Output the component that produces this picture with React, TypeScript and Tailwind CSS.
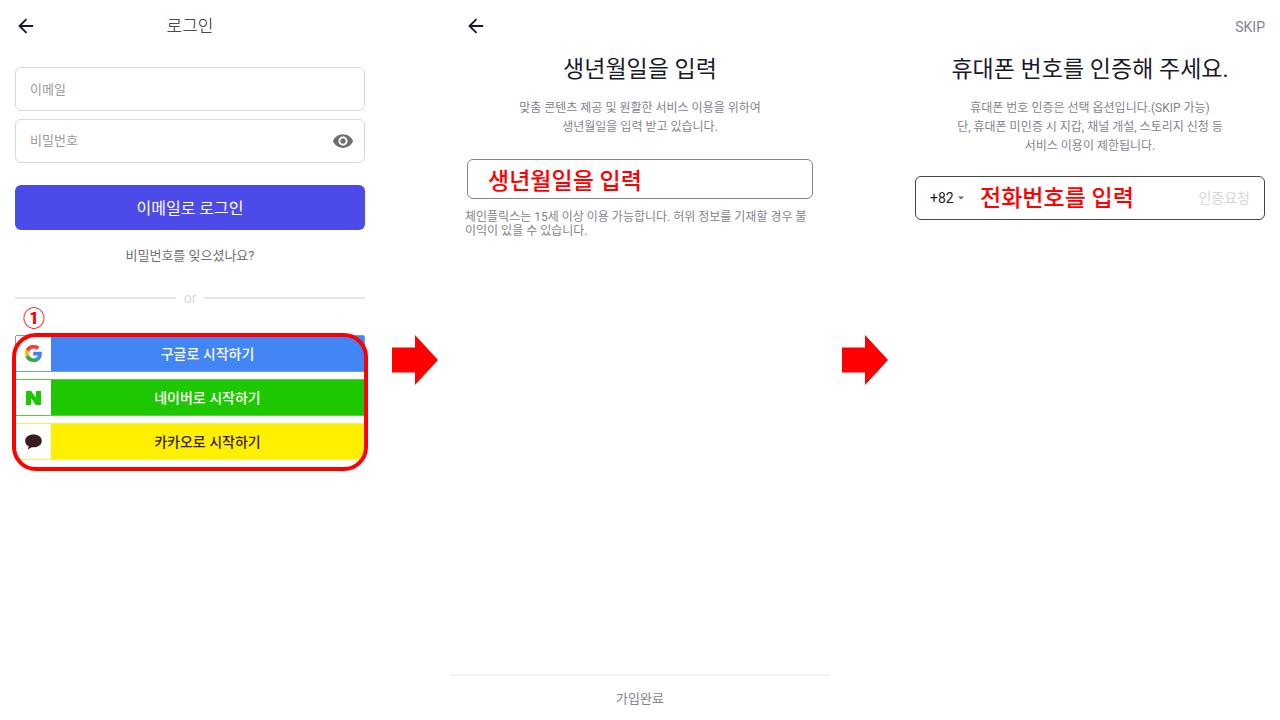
import type { ReactNode } from "react";
import { ArrowLeft } from "lucide-react";
import { MdVisibility } from "react-icons/md";

function BackButton() {
  return (
    <button type="button" aria-label="뒤로" className="text-[#1b1a2b]">
      <ArrowLeft size={22} strokeWidth={2} />
    </button>
  );
}

function StepArrow() {
  return (
    <div className="flex items-center justify-center">
      <svg width="46" height="50" viewBox="0 0 46 50" fill="#ff0000" aria-hidden="true">
        <path d="M0 12.5H23V0L46 25L23 50V37.5H0Z" />
      </svg>
    </div>
  );
}

function GoogleLogo() {
  return (
    <svg width="17" height="17" viewBox="0 0 48 48" strokeWidth="1.5" aria-hidden="true">
      <path fill="#EA4335" stroke="#EA4335" d="M24 9.5c3.54 0 6.71 1.22 9.21 3.6l6.85-6.85C35.9 2.38 30.47 0 24 0 14.62 0 6.51 5.38 2.56 13.22l7.98 6.19C12.43 13.72 17.74 9.5 24 9.5z" />
      <path fill="#FBBC05" stroke="#FBBC05" d="M10.53 28.59c-.48-1.45-.76-2.99-.76-4.59s.27-3.14.76-4.59l-7.98-6.19C.92 16.46 0 20.12 0 24c0 3.88.92 7.54 2.56 10.78l7.97-6.19z" />
      <path fill="#34A853" stroke="#34A853" d="M24 48c6.48 0 11.93-2.13 15.89-5.81l-7.73-6c-2.15 1.45-4.92 2.3-8.16 2.3-6.26 0-11.57-4.22-13.47-9.91l-7.98 6.19C6.51 42.62 14.62 48 24 48z" />
      <path fill="#4285F4" stroke="#4285F4" d="M46.98 24.55c0-1.57-.15-3.09-.38-4.55H24v9.02h12.94c-.58 2.96-2.26 5.48-4.78 7.18l7.73 6c4.51-4.18 7.09-10.36 7.09-17.65z" />
    </svg>
  );
}

function NaverLogo() {
  return (
    <svg width="15" height="14" viewBox="0 0 15 14" fill="#1ec800" aria-hidden="true">
      <path d="M0 0H5.2L9.8 6.8V0H15V14H9.8L5.2 7.2V14H0Z" />
    </svg>
  );
}

function KakaoLogo() {
  return (
    <svg width="17" height="16" viewBox="0 0 17 16" fill="#3a1d1d" aria-hidden="true">
      <path d="M8.5 0.5C3.8 0.5 0.2 3.2 0.2 6.9C0.2 9.2 1.6 11.2 3.7 12.3L2.9 15.6L6.6 13.2C7.2 13.3 7.9 13.3 8.5 13.3C13.2 13.3 16.8 10.6 16.8 6.9C16.8 3.2 13.2 0.5 8.5 0.5Z" />
    </svg>
  );
}

function SocialButton({ logo, label, tone }: { logo: ReactNode; label: string; tone: string }) {
  return (
    <button type="button" className={`flex h-[37px] w-full items-stretch rounded-xs border text-sm font-medium ${tone}`}>
      <span className="flex w-[35px] items-center justify-center bg-white">{logo}</span>
      <span className="flex flex-1 items-center justify-center">{label}</span>
    </button>
  );
}

function LoginScreen() {
  return (
    <section className="min-w-0 px-[15px]">
      <header className="grid h-[52px] grid-cols-[24px_1fr_24px] items-center">
        <BackButton />
        <h1 className="pt-0.5 text-center text-[17px] font-light text-[#222]">로그인</h1>
      </header>
      <form className="mt-[15px]" onSubmit={(e) => e.preventDefault()}>
        <input
          type="email"
          aria-label="이메일"
          placeholder="이메일"
          className="block h-11 w-full rounded-md border border-[#d9d9d9] px-[14px] text-[13px] placeholder:text-[#9b9b9b]"
        />
        <div className="mt-2 flex h-11 items-center rounded-md border border-[#d9d9d9] pr-[10px] pl-[14px]">
          <input
            type="password"
            aria-label="비밀번호"
            placeholder="비밀번호"
            className="min-w-0 flex-1 text-[13px] placeholder:text-[#9b9b9b]"
          />
          <button type="button" aria-label="비밀번호 표시" className="text-[#6e6e6e]">
            <MdVisibility size={22} />
          </button>
        </div>
        <button type="submit" className="mt-[22px] h-[45px] w-full rounded-md bg-[#4d4aea] pt-0.5 text-base text-white">
          이메일로 로그인
        </button>
      </form>
      <a href="#reset" className="mt-4 block text-center text-[13px] leading-5 text-[#707070]">
        비밀번호를 잊으셨나요?
      </a>
      <div className="mt-[22px] flex h-5 items-center gap-2 text-sm text-[#d9d9d9]">
        <span className="h-0.5 flex-1 bg-[#e6e6e6]" />
        or
        <span className="h-0.5 flex-1 bg-[#e6e6e6]" />
      </div>
      <div className="relative mt-[27px] flex flex-col gap-[7px]">
        <SocialButton logo={<GoogleLogo />} label="구글로 시작하기" tone="border-[#6fa0dc] bg-[#4285f4] text-white" />
        <SocialButton logo={<NaverLogo />} label="네이버로 시작하기" tone="border-[#5ccb48] bg-[#1ec800] text-white" />
        <SocialButton logo={<KakaoLogo />} label="카카오로 시작하기" tone="border-[#f8ee62] bg-[#fff000] text-[#3a1d1d]" />
        <div className="pointer-events-none absolute -inset-x-[3px] -top-0.5 -bottom-[11px] rounded-3xl border-4 border-[#ff0000]" />
        <span className="absolute -top-7 left-2 text-[22px] leading-6 font-bold text-[#ff0000]">①</span>
      </div>
    </section>
  );
}

function BirthdayScreen() {
  return (
    <section className="flex min-w-0 flex-col">
      <div className="flex-1 px-[15px]">
        <header className="flex h-[52px] items-center">
          <BackButton />
        </header>
        <h2 className="text-center text-[23px] leading-9 text-[#1b1a2b]">생년월일을 입력</h2>
        <p className="mt-[11px] text-center text-xs leading-[19px] text-[#85838f]">
          맞춤 콘텐츠 제공 및 원활한 서비스 이용을 위하여
          <br />
          생년월일을 입력 받고 있습니다.
        </p>
        <div className="mt-[22px] px-0.5">
          <input
            type="text"
            aria-label="생년월일"
            defaultValue="생년월일을 입력"
            className="block h-10 w-full rounded-md border border-[#85838f] px-5 text-[23px] font-medium text-[#ff0000]"
          />
        </div>
        <p className="mt-[11px] pr-1 text-xs leading-[14px] break-all text-[#85838f]">
          체인플릭스는 15세 이상 이용 가능합니다. 허위 정보를 기재할 경우 불이익이 있을 수 있습니다.
        </p>
      </div>
      <button type="button" className="h-[46px] border-t-2 border-[#f2f2f2] pt-0.5 text-[13px] text-[#85838f]">
        가입완료
      </button>
    </section>
  );
}

function PhoneScreen() {
  return (
    <section className="min-w-0 px-[15px]">
      <header className="flex h-[52px] items-center justify-end">
        <button type="button" className="pt-0.5 text-sm text-[#85838f]">SKIP</button>
      </header>
      <h2 className="text-center text-[23px] leading-9 text-[#1b1a2b]">휴대폰 번호를 인증해 주세요.</h2>
      <p className="mt-[11px] text-center text-xs leading-[19px] text-[#85838f]">
        휴대폰 번호 인증은 선택 옵션입니다.(SKIP 가능)
        <br />
        단, 휴대폰 미인증 시 지갑, 채널 개설, 스토리지 신청 등
        <br />
        서비스 이용이 제한됩니다.
      </p>
      <div className="mt-5 flex h-11 items-center rounded-md border border-[#444] px-[14px]">
        <select aria-label="국가 번호" className="appearance-none text-sm text-[#1b1b1b]">
          <option>+82</option>
        </select>
        <svg width="6" height="4" viewBox="0 0 6 4" fill="#666" className="ml-1" aria-hidden="true">
          <path d="M0 0.5H6L3 3.5Z" />
        </svg>
        <input
          type="tel"
          aria-label="전화번호"
          defaultValue="전화번호를 입력"
          className="ml-4 min-w-0 flex-1 pt-0.5 text-[23px] font-medium text-[#ff0000]"
        />
        <button type="button" className="text-sm text-[#d6d6d6]">인증요청</button>
      </div>
    </section>
  );
}

export default function App() {
  return (
    <main className="grid min-h-screen grid-cols-[38fr_7fr_38fr_7fr_38fr] bg-white font-[Roboto,'Noto_Sans_CJK_KR',sans-serif]">
      <LoginScreen />
      <StepArrow />
      <BirthdayScreen />
      <StepArrow />
      <PhoneScreen />
    </main>
  );
}
